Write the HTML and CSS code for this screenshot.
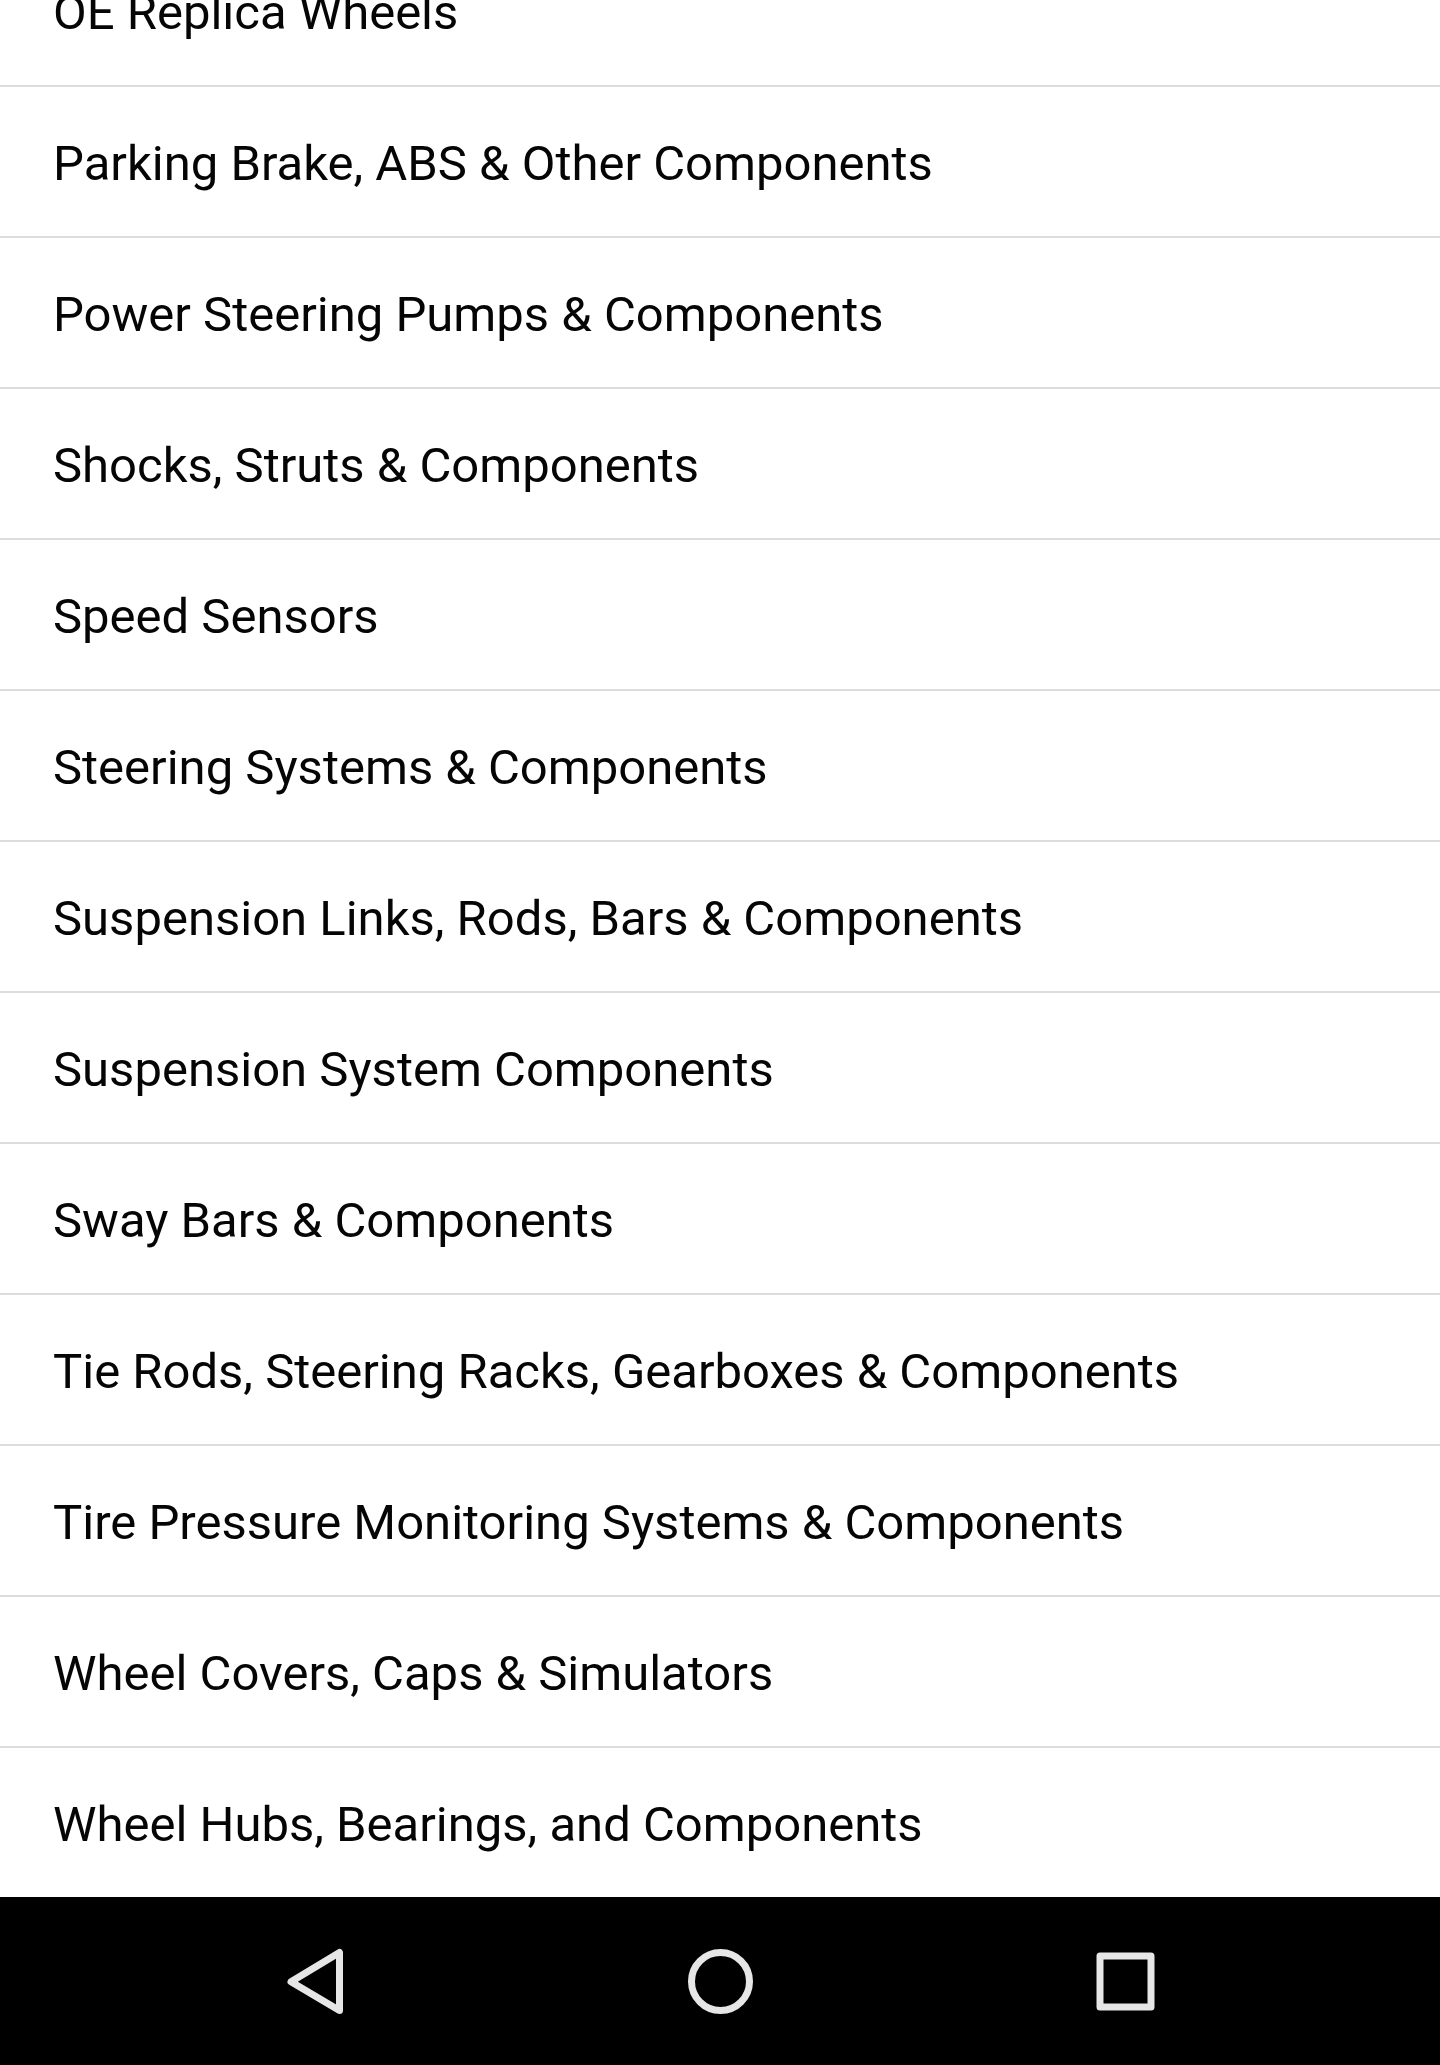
FILE: index.html
```html
<!DOCTYPE html>
<html lang="en">
<head>
<meta charset="utf-8">
<meta name="viewport" content="width=device-width, initial-scale=1">
<title>Categories</title>
<link rel="stylesheet" href="styles.css">
</head>
<body>
<main class="screen">
  <ul class="category-list">
    <li class="category"><a class="category-link" href="#">OE Replica Wheels</a></li>
    <li class="category"><a class="category-link" href="#">Parking Brake, ABS &amp; Other Components</a></li>
    <li class="category"><a class="category-link" href="#">Power Steering Pumps &amp; Components</a></li>
    <li class="category"><a class="category-link" href="#">Shocks, Struts &amp; Components</a></li>
    <li class="category"><a class="category-link" href="#">Speed Sensors</a></li>
    <li class="category"><a class="category-link" href="#">Steering Systems &amp; Components</a></li>
    <li class="category"><a class="category-link" href="#">Suspension Links, Rods, Bars &amp; Components</a></li>
    <li class="category"><a class="category-link" href="#">Suspension System Components</a></li>
    <li class="category"><a class="category-link" href="#">Sway Bars &amp; Components</a></li>
    <li class="category"><a class="category-link" href="#">Tie Rods, Steering Racks, Gearboxes &amp; Components</a></li>
    <li class="category"><a class="category-link" href="#">Tire Pressure Monitoring Systems &amp; Components</a></li>
    <li class="category"><a class="category-link" href="#">Wheel Covers, Caps &amp; Simulators</a></li>
    <li class="category"><a class="category-link" href="#">Wheel Hubs, Bearings, and Components</a></li>
  </ul>
</main>
<nav class="system-bar" aria-label="System">
  <button class="system-button" type="button" aria-label="Back">
    <svg class="system-icon" viewBox="0 0 72 72" aria-hidden="true"><path d="M60.5 7.5v58L12 36.7z"/></svg>
  </button>
  <button class="system-button" type="button" aria-label="Home">
    <svg class="system-icon" viewBox="0 0 72 72" aria-hidden="true"><circle cx="36.5" cy="36.5" r="29"/></svg>
  </button>
  <button class="system-button" type="button" aria-label="Overview">
    <svg class="system-icon" viewBox="0 0 72 72" aria-hidden="true"><rect x="11" y="11" width="51" height="51"/></svg>
  </button>
</nav>
</body>
</html>
```
FILE: styles.css
```css
body {
  margin: 0;
  background: #fff;
  color: #050505;
  font-family: Roboto, "Liberation Sans", sans-serif;
}

.screen {
  overflow: hidden;
}

/* The list is scrolled part-way through its first row. */
.category-list {
  margin: -64px 0 0;
  padding: 0;
  list-style: none;
}

.category + .category {
  border-top: 2px solid #dcdcdc;
}

.category-link {
  display: block;
  padding: 47px 53px 42px;
  color: inherit;
  font-size: 49px;
  line-height: 60px;
  text-decoration: none;
}

.system-bar {
  display: flex;
  justify-content: center;
  gap: 209px;
  padding: 48px 0;
  background: #000;
}

.system-button {
  display: flex;
  padding: 0 62px;
  border: 0;
  background: none;
}

.system-icon {
  width: 72px;
  height: 72px;
  fill: none;
  stroke: #e6e6e6;
  stroke-width: 7;
  stroke-linejoin: round;
}
```
